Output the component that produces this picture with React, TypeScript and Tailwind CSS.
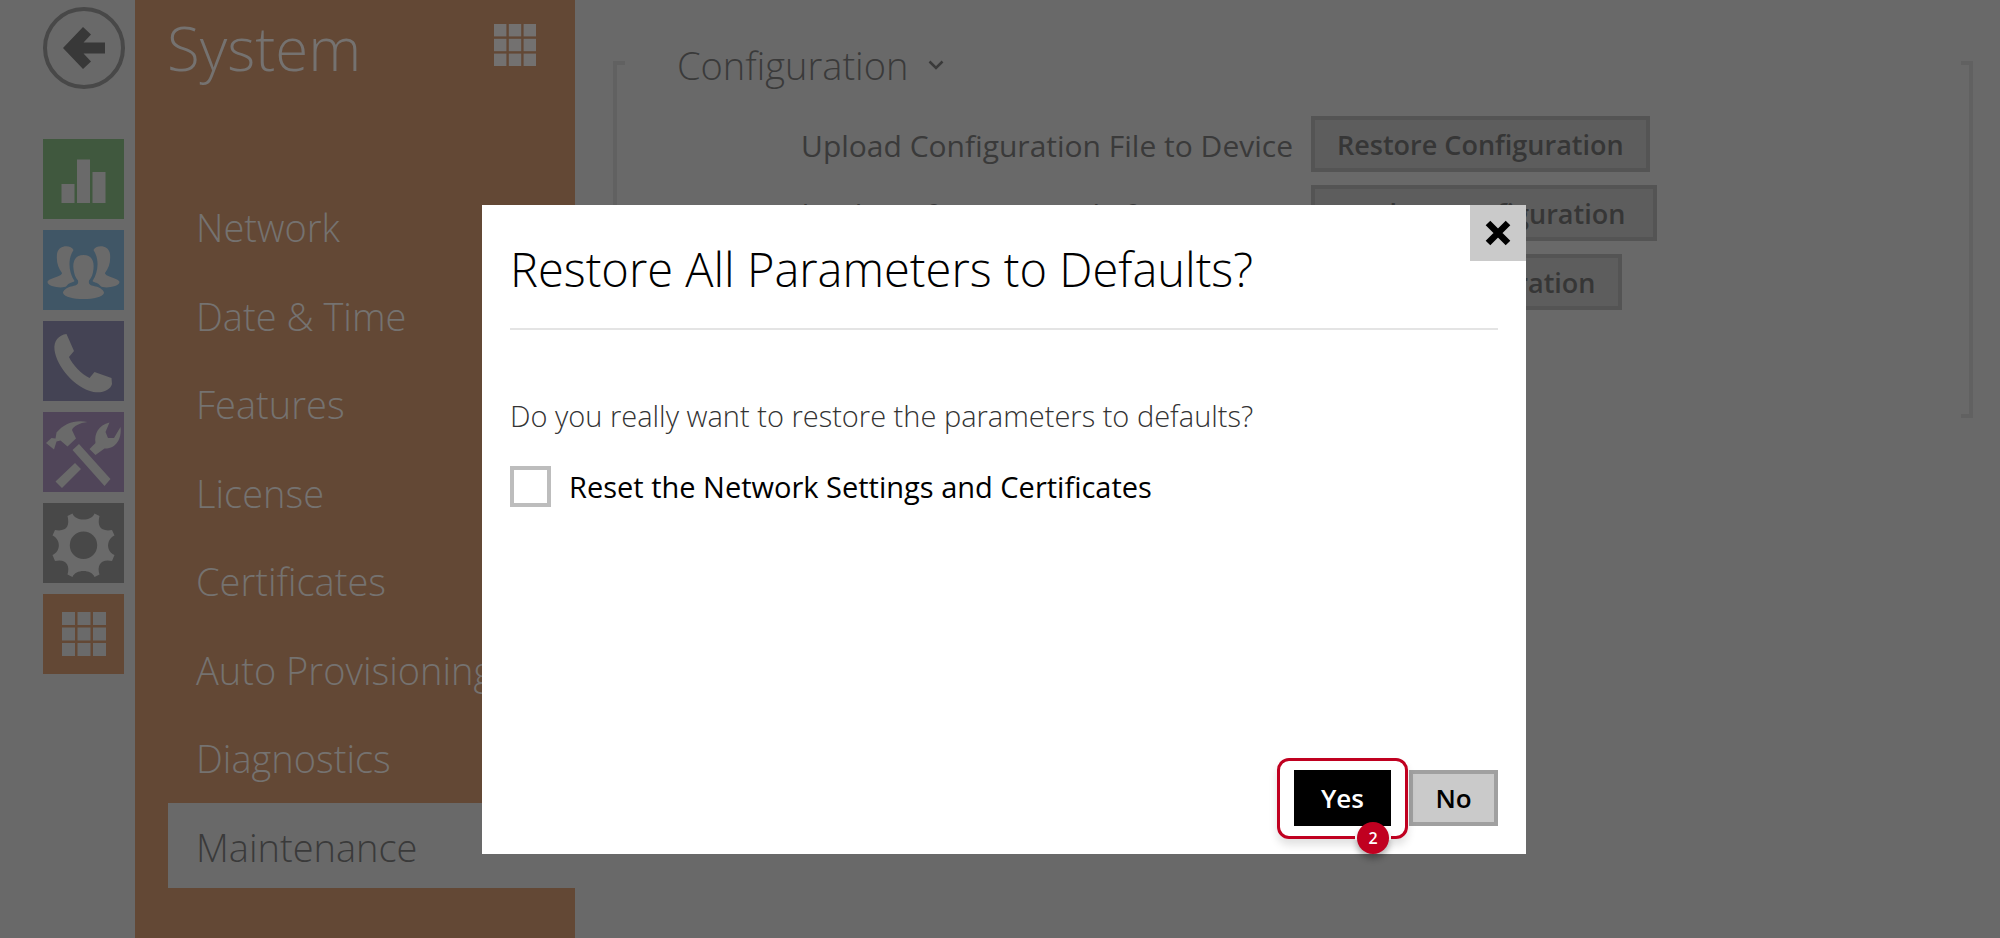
import React from "react";

type Tile = { name: string; bg: string; icon: React.ReactNode };

function GridIcon({ className }: { className: string }) {
  return (
    <svg viewBox="0 0 44 44" className={className} fill="currentColor" aria-hidden="true">
      {[0, 15.5, 31].map((y) => [0, 15.5, 31].map((x) => <rect key={`${x}-${y}`} x={x} y={y} width="13" height="13" />))}
    </svg>
  );
}

const tiles: Tile[] = [
  {
    name: "Status",
    bg: "bg-[#40583e]",
    icon: (
      <svg viewBox="0 0 80 80" className="size-full" fill="currentColor">
        <path d="M18 45h13v19H18zM33.500 20.500h13V64h-13zM49 33h13v31H49z" />
      </svg>
    ),
  },
  {
    name: "Directory",
    bg: "bg-[#405666]",
    icon: (
      <svg viewBox="0 0 80 80" className="size-full" fill="currentColor">
        <path d="M30 20C28 15 15 14 13.500 24c-.8 8 1 14 5 19 0 4-14 5-14.500 9C4 57 20 59 23 56c3-4 6-3 8-5-6-9-7-22-1-31zM50 20c2-5 15-6 16.500 4 .8 8-1 14-5 19 0 4 14 5 14.500 9 0 5-16 7-19 4-3-4-6-3-8-5 6-9 7-22 1-31z" />
        <path d="M40 25c-8 0-11 6-10 14 .6 5 2 9 4.500 11.500 1 5-3 5-7 6-5 1.500-8 4-8 6.500C21 67 30 69 40 69s19-2 20.500-6c0-2.500-3-5-8-6.500-4-1-8-1-7-6 2.500-2.500 4-6.500 4.500-11.500 1-8-2-14-10-14z" />
      </svg>
    ),
  },
  {
    name: "Calling",
    bg: "bg-[#444354]",
    icon: (
      <svg viewBox="0 0 80 80" className="size-full" fill="currentColor">
        <path d="M23 13C15 14 10 20 11 29c2 16 20 38 39 42 9 1.500 17-2 18.500-8l-.5-6-17-6-5 6C38 53 29 44 25.500 36l5-6z" />
      </svg>
    ),
  },
  {
    name: "Services",
    bg: "bg-[#504559]",
    icon: (
      <svg viewBox="0 0 80 80" className="size-full" fill="currentColor">
        <path d="M2.500 31l5.500-5 4 .5 1-6C21 11 32 7.500 44 10c-8 1-14 4-15.500 8l4 8.500-8.500 8-7-6-4 1-2.500 8z" />
        <path d="M29 38l6.500-6L67 67l-6 7zM31.500 51l6 6L18.500 76 12 69.500zM46 37l6-6c-1.500-9 3-18 14-20.500l-4 9.500 2.500 6h6L77 15c1.500 11-4 22-16 21.500L52 43z" />
      </svg>
    ),
  },
  {
    name: "Hardware",
    bg: "bg-[#484848]",
    icon: (
      <svg viewBox="0 0 80 80" className="size-full" fill="currentColor">
        <path
          fillRule="evenodd"
          d="M29 10.500C32 18.500 48 18.500 51 10.500L56 13C53.500 23 57 29 68.500 27L71 32.500C62.500 36.500 62.500 48.500 71 52L68.500 58C58 55.500 53 62 56 71.500L51 74C48 66 32 66 29 74L24 71.500C27 62 22 55.500 11.500 58L9 52C17.500 48.500 17.500 36.500 9 32.500L11.500 27C23 29 26.500 23 24 13zM40 28.500a13.700 13.700 0 1 0 0 27.400a13.700 13.700 0 1 0 0-27.400z"
        />
      </svg>
    ),
  },
  {
    name: "System",
    bg: "bg-[#634835]",
    icon: <GridIcon className="size-11" />,
  },
];

const menu = ["Network", "Date & Time", "Features", "License", "Certificates", "Auto Provisioning", "Diagnostics", "Maintenance"];

const rows = [
  { label: "Upload Configuration File to Device", action: "Restore Configuration", width: "" },
  { label: "Download Configuration File from Device", action: "Backup Configuration", width: "min-w-[346px]" },
  { label: "Reset Device to Default State", action: "Reset Configuration", width: "" },
];

export default function App() {
  return (
    <div className="relative flex min-h-screen overflow-hidden bg-[#696969] font-['Open_Sans','Noto_Sans',sans-serif] text-[#3a3a3a]">
      <nav aria-label="Sections" className="flex w-[135px] shrink-0 flex-col gap-[11px] pt-[7px] pl-[43px]">
        <button aria-label="Back" className="mb-[39px] flex size-[82px] items-center justify-center rounded-full border-4 border-[#484848] text-[#383838]">
          <svg viewBox="0 0 42 42" className="size-[42px]" fill="currentColor">
            <path d="M0 21L20 0l8 7.500L20.500 15.500H42v11H20.500L28 34.500 20 42z" />
          </svg>
        </button>
        {tiles.map((t) => (
          <button key={t.name} aria-label={t.name} className={`flex h-20 w-[81px] items-center justify-center text-[#6a6a6a] ${t.bg}`}>
            {t.icon}
          </button>
        ))}
      </nav>

      <aside className="w-[440px] shrink-0 bg-[#634835] font-light text-[#757270]">
        <header className="flex h-[183px] items-start justify-between pr-[39px] pl-8">
          <h1 className="text-[60px] leading-[96px]">System</h1>
          <GridIcon className="mt-6 size-[42px] text-[#737170]" />
        </header>
        <ul className="flex h-[705px] flex-col justify-between pl-[33px]">
          {menu.map((m) => (
            <li key={m}>
              <a
                href="#"
                className={`flex h-[85px] items-center pt-1 pl-7 text-[38px] whitespace-nowrap ${m === "Maintenance" ? "bg-[#696969] text-[#3a3a3a]" : ""}`}
              >
                {m}
              </a>
            </li>
          ))}
        </ul>
      </aside>

      <main className="flex-1 pt-[61px] pr-[27px] pl-[38px]">
        <section className="flex h-[357px]">
          <div className="w-3 shrink-0 border-y-4 border-l-4 border-[#616161]" />
          <div className="flex-1">
            <h2 className="-mt-[22px] flex h-[52px] items-center gap-5 pl-[52px] text-[38px] font-light">
              Configuration
              <svg viewBox="0 0 16 10" className="h-[10px] w-4" fill="none" stroke="currentColor" strokeWidth="2.500">
                <path d="M1.500 1.500L8 8l6.500-6.500" />
              </svg>
            </h2>
            <div className="mt-[25px] flex flex-col gap-[13px]">
              {rows.map(({ label, action, width }) => (
                <div key={label} className="flex items-center">
                  <span className="w-[668px] pt-1 text-right text-[30px] leading-10 whitespace-nowrap">{label}</span>
                  <button className={`ml-[18px] h-14 border-4 border-[#545454] bg-[#5d5d5d] px-[22px] pt-[2px] text-[27px] leading-10 font-semibold text-[#363636] ${width}`}>
                    {action}
                  </button>
                </div>
              ))}
            </div>
          </div>
          <div className="w-3 shrink-0 border-y-4 border-r-4 border-[#616161]" />
        </section>
      </main>

      <div
        role="dialog"
        aria-modal="true"
        aria-labelledby="dialog-title"
        className="absolute top-[205px] left-[482px] flex h-[649px] w-[1044px] flex-col bg-white px-7 pb-7 text-black"
      >
        <button aria-label="Close" className="absolute top-0 right-0 flex h-14 w-14 items-center justify-center bg-[#cacaca]">
          <svg viewBox="0 0 26 26" className="size-[26px]" fill="none" stroke="currentColor" strokeWidth="6.500">
            <path d="M3 3l20 20M23 3L3 23" />
          </svg>
        </button>
        <h2 id="dialog-title" className="flex h-[125px] items-center border-b-2 border-[#e4e4e4] pt-[6px] text-[47px] font-light">
          Restore All Parameters to Defaults?
        </h2>
        <p className="mt-16 text-[29px] leading-[44px] font-light text-[#333333]">Do you really want to restore the parameters to defaults?</p>
        <label className="mt-7 flex items-center gap-[18px] text-[29px] leading-10">
          <input type="checkbox" className="size-[41px] appearance-none border-4 border-[#bdbdbd] bg-white" />
          Reset the Network Settings and Certificates
        </label>
        <div className="mt-auto flex justify-end gap-[18px] text-[26px] font-semibold">
          <div className="relative">
            <button className="h-14 w-[97px] bg-black text-white">Yes</button>
            <div className="pointer-events-none absolute -inset-x-[17px] -top-3 -bottom-[13px] rounded-xl border-3 border-[#c00020] shadow-[0_6px_8px_rgba(0,0,0,0.12)]" />
            <span className="absolute right-0 -bottom-[14px] h-[5px] w-9 bg-white" />
            <span className="absolute right-[2px] -bottom-7 flex size-8 items-center justify-center rounded-full bg-[#c00020] text-base text-white shadow-[0_5px_6px_rgba(0,0,0,0.3)]">
              2
            </span>
          </div>
          <button className="h-14 w-[89px] border-4 border-[#a0a0a0] bg-[#cacaca]">No</button>
        </div>
      </div>
    </div>
  );
}
